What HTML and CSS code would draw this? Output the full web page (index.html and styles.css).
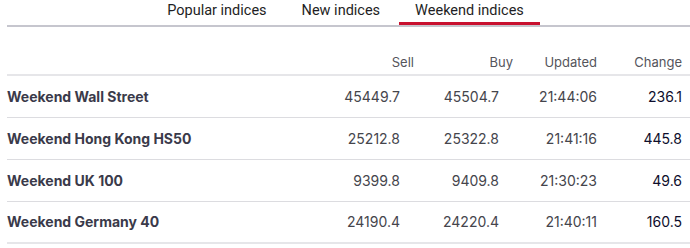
FILE: index.html
```html
<!DOCTYPE html>
<html lang="en">
<head>
    <meta charset="UTF-8">
    <meta name="viewport" content="width=device-width, initial-scale=1.0">
    <title>Weekend indices</title>
    <link rel="stylesheet" href="styles.css">
</head>
<body>
    <div class="tabs">
        <a class="tab">Popular indices</a>
        <a class="tab">New indices</a>
        <a class="tab active">Weekend indices</a>
    </div>

    <table class="prices">
        <colgroup>
            <col class="col-name">
            <col class="col-sell">
            <col class="col-buy">
            <col class="col-time">
            <col class="col-change">
        </colgroup>
        <thead>
            <tr>
                <th></th>
                <th>Sell</th>
                <th>Buy</th>
                <th>Updated</th>
                <th class="change">Change</th>
            </tr>
        </thead>
        <tbody>
            <tr>
                <td class="name">Weekend Wall Street</td>
                <td class="price">45449.7</td>
                <td class="price">45504.7</td>
                <td>21:44:06</td>
                <td class="change">236.1</td>
            </tr>
            <tr>
                <td class="name">Weekend Hong Kong HS50</td>
                <td class="price">25212.8</td>
                <td class="price">25322.8</td>
                <td>21:41:16</td>
                <td class="change">445.8</td>
            </tr>
            <tr>
                <td class="name">Weekend UK 100</td>
                <td class="price">9399.8</td>
                <td class="price">9409.8</td>
                <td>21:30:23</td>
                <td class="change">49.6</td>
            </tr>
            <tr>
                <td class="name">Weekend Germany 40</td>
                <td class="price">24190.4</td>
                <td class="price">24220.4</td>
                <td>21:40:11</td>
                <td class="change">160.5</td>
            </tr>
        </tbody>
    </table>
</body>
</html>
```

FILE: styles.css
```css
* {
    margin: 0;
    padding: 0;
    box-sizing: border-box;
}

body {
    background: #ffffff;
    color: #444;
    font-family: 'Inter', 'Liberation Sans', sans-serif;
}

.tabs {
    display: flex;
    justify-content: center;
    gap: 3px;
    margin-left: 7px;
    padding-right: 6px;
    border-bottom: 2px solid #c6c6ce;
}

.tab {
    font-family: 'Roboto', 'Liberation Sans', sans-serif;
    font-size: 14.5px;
    line-height: 18px;
    color: #1e1e24;
    padding: 2px 16px;
    border-bottom: 3px solid transparent;
}

.tab.active {
    border-bottom-color: #c8102e;
}

.prices {
    width: 683px;
    margin: 22px 0 0 7px;
    border-collapse: collapse;
    table-layout: fixed;
}

.col-name { width: 323px; }
.col-sell { width: 84px; }
.col-buy { width: 99px; }
.col-time { width: 84px; }
.col-change { width: 93px; }

th {
    font-weight: normal;
    font-size: 13px;
    line-height: 16px;
    color: #55555c;
    text-align: right;
    height: 26px;
    vertical-align: bottom;
    padding-bottom: 4px;
    border-bottom: 2px solid #e6e6e9;
}

td {
    font-size: 14px;
    height: 42px;
    text-align: right;
    border-bottom: 1px solid #dcdce0;
    color: #45454c;
}

tbody tr:last-child td {
    border-bottom: 2px solid #e6e6e9;
}

td.name {
    text-align: left;
    font-weight: 700;
    color: #3a3a4a;
}

td.price {
    padding-right: 14px;
}

.change {
    padding-right: 8px;
}

td.change {
    color: #0e0e2c;
}
```
